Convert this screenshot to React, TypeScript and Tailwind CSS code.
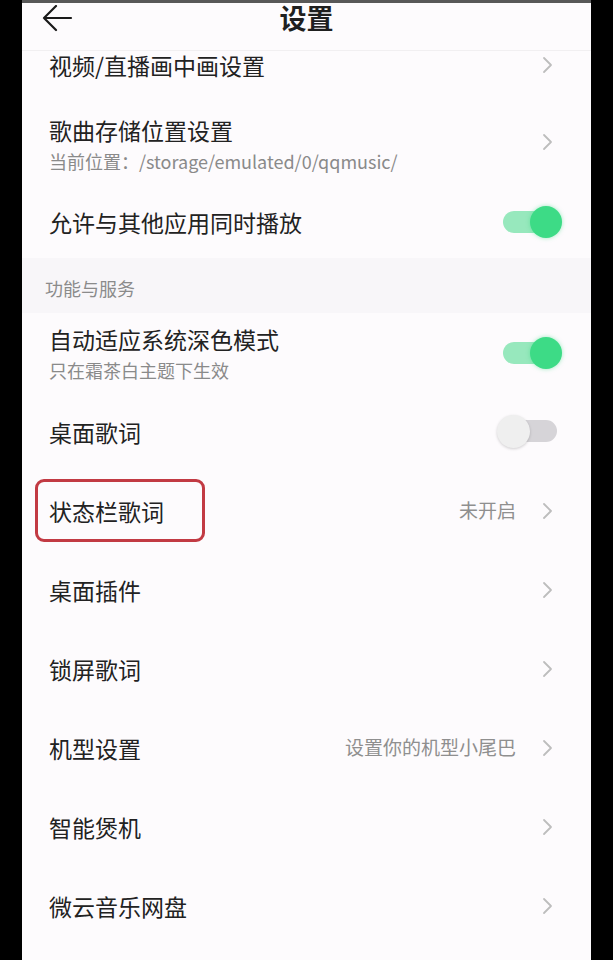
import type { ReactNode } from 'react'

function Chevron() {
  return (
    <svg width="14" height="18" viewBox="0 0 14 18" fill="none" className="shrink-0">
      <path d="M3 2l7 7-7 7" stroke="#bdbdbd" strokeWidth="1.8" strokeLinecap="round" strokeLinejoin="round" />
    </svg>
  )
}

function ToggleOn() {
  return (
    <div className="relative h-[32px] w-[59px] shrink-0">
      <div className="absolute left-0 top-[5px] h-[22px] w-[52px] rounded-full bg-[#97e8bd]" />
      <div className="absolute right-0 top-0 h-[32px] w-[32px] rounded-full bg-[#3ddb86] shadow-[0_0_4px_rgba(61,219,134,0.5)]" />
    </div>
  )
}

function ToggleOff() {
  return (
    <div className="relative h-[33px] w-[60px] shrink-0">
      <div className="absolute right-0 top-[5px] h-[22px] w-[52px] rounded-full bg-[#d6d4d8]" />
      <div className="absolute left-0 top-0 h-[33px] w-[33px] rounded-full bg-[#efefef] shadow-[0_1px_3px_rgba(0,0,0,0.18)]" />
    </div>
  )
}

function Row({
  title,
  right,
  pr = 'pr-[36px]',
  h = 'h-[79px]',
}: {
  title: ReactNode
  right?: ReactNode
  pr?: string
  h?: string
}) {
  return (
    <div className={`flex ${h} items-center justify-between pl-[27px] ${pr}`}>
      <div className="text-[23px] leading-[30px] text-[#222]">{title}</div>
      {right ?? <Chevron />}
    </div>
  )
}

function Hint({ text }: { text: string }) {
  return (
    <div className="flex items-center gap-[25px]">
      <span className="text-[19px] text-[#8f8f8f]">{text}</span>
      <Chevron />
    </div>
  )
}

export default function App() {
  return (
    <div className="flex h-[960px] w-[613px] overflow-hidden bg-black font-['Noto_Sans_CJK_SC','Noto_Sans',sans-serif]">
      <div className="w-[22px] shrink-0" />
      <div className="flex w-[569px] flex-col border-t-[3px] border-[#585858] bg-[#fdfbfd]">
        <header className="relative flex h-[48px] shrink-0 justify-center border-b border-[#f1eff1]">
          <svg width="32" height="28" viewBox="0 0 32 28" fill="none" className="absolute left-[19px] top-[2px]">
            <path d="M30 13H3M15 1L3 13l12 12" stroke="#1a1a1a" strokeWidth="2.2" strokeLinecap="round" strokeLinejoin="round" />
          </svg>
          <h1 className="text-[27px] font-bold leading-[30px] text-[#1f1f1f]">设置</h1>
        </header>

        <Row title="视频/直播画中画设置" h="h-[27px]" />

        <div className="flex h-[108px] items-center justify-between pl-[27px] pr-[36px]">
          <div className="mt-[24px] flex flex-col gap-[4px]">
            <span className="text-[23px] leading-[30px] text-[#222]">歌曲存储位置设置</span>
            <span className="text-[18px] leading-[24px] text-[#8a8a8a]">当前位置：/storage/emulated/0/qqmusic/</span>
          </div>
          <div className="mt-[20px]">
            <Chevron />
          </div>
        </div>

        <Row title="允许与其他应用同时播放" h="h-[72px]" pr="pr-[29px]" right={<ToggleOn />} />

        <div className="flex h-[55px] items-center bg-[#f8f6f9] pl-[23px] pt-[5px] text-[18px] text-[#8b8b8b]">
          功能与服务
        </div>

        <div className="flex h-[79px] items-center justify-between pl-[27px] pr-[29px]">
          <div className="flex flex-col gap-[4px]">
            <span className="text-[23px] leading-[30px] text-[#222]">自动适应系统深色模式</span>
            <span className="text-[18px] leading-[24px] text-[#8a8a8a]">只在霜茶白主题下生效</span>
          </div>
          <ToggleOn />
        </div>

        <Row title="桌面歌词" pr="pr-[34px]" right={<ToggleOff />} />

        <div className="flex h-[79px] items-center justify-between pl-[27px] pr-[36px]">
          <div className="-ml-[14px] flex h-[63px] w-[170px] items-center rounded-[9px] border-[3px] border-[#c23a43] pl-[11px] text-[23px] leading-[30px] text-[#222]">
            状态栏歌词
          </div>
          <Hint text="未开启" />
        </div>

        <Row title="桌面插件" />
        <Row title="锁屏歌词" />
        <Row title="机型设置" right={<Hint text="设置你的机型小尾巴" />} />
        <Row title="智能煲机" />
        <Row title="微云音乐网盘" />
      </div>
      <div className="w-[22px] shrink-0" />
    </div>
  )
}
